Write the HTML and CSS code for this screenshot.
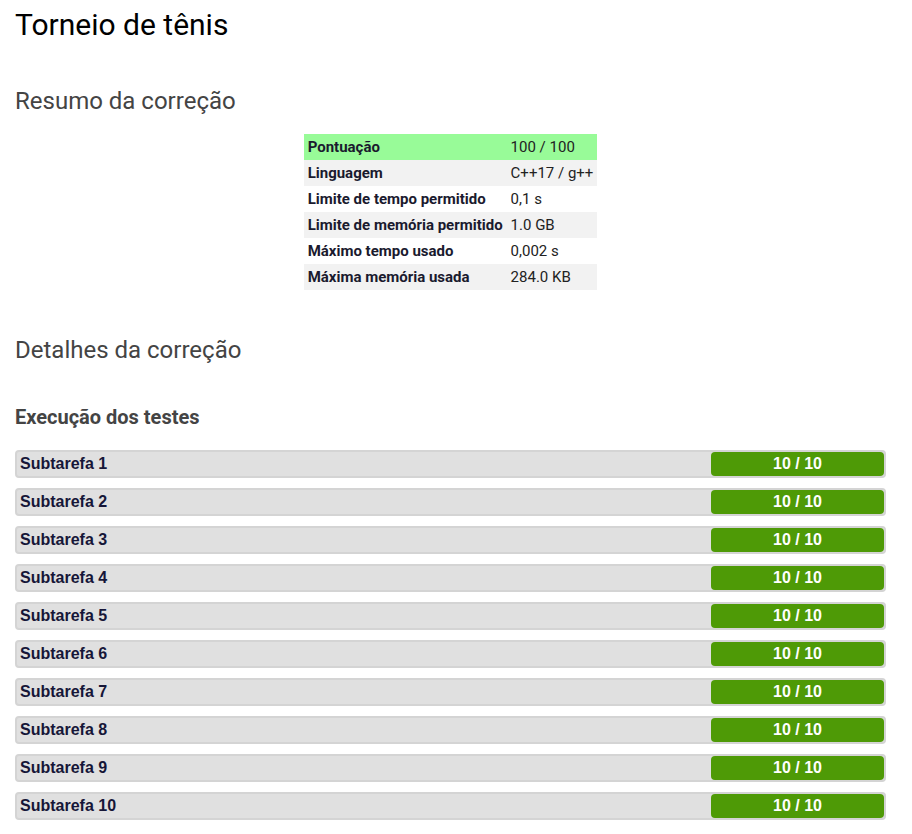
FILE: index.html
```html
<!DOCTYPE html>
<html lang="pt">
<head>
<meta charset="utf-8">
<title>Torneio de tênis</title>
<link rel="stylesheet" href="styles.css">
</head>
<body>
<div class="page">
  <h1 class="title">Torneio de tênis</h1>
  <h2 class="section">Resumo da correção</h2>
  <div class="summary-wrap">
    <table class="summary">
      <tr class="score"><th>Pontuação</th><td>100 / 100</td></tr>
      <tr class="alt"><th>Linguagem</th><td>C++17 / g++</td></tr>
      <tr><th>Limite de tempo permitido</th><td>0,1 s</td></tr>
      <tr class="alt"><th>Limite de memória permitido</th><td>1.0 GB</td></tr>
      <tr><th>Máximo tempo usado</th><td>0,002 s</td></tr>
      <tr class="alt"><th>Máxima memória usada</th><td>284.0 KB</td></tr>
    </table>
  </div>
  <h2 class="section details">Detalhes da correção</h2>
  <h3 class="sub">Execução dos testes</h3>
  <div class="tasks">
    <div class="task"><span class="name">Subtarefa 1</span><span class="badge">10 / 10</span></div>
    <div class="task"><span class="name">Subtarefa 2</span><span class="badge">10 / 10</span></div>
    <div class="task"><span class="name">Subtarefa 3</span><span class="badge">10 / 10</span></div>
    <div class="task"><span class="name">Subtarefa 4</span><span class="badge">10 / 10</span></div>
    <div class="task"><span class="name">Subtarefa 5</span><span class="badge">10 / 10</span></div>
    <div class="task"><span class="name">Subtarefa 6</span><span class="badge">10 / 10</span></div>
    <div class="task"><span class="name">Subtarefa 7</span><span class="badge">10 / 10</span></div>
    <div class="task"><span class="name">Subtarefa 8</span><span class="badge">10 / 10</span></div>
    <div class="task"><span class="name">Subtarefa 9</span><span class="badge">10 / 10</span></div>
    <div class="task"><span class="name">Subtarefa 10</span><span class="badge">10 / 10</span></div>
  </div>
</div>
</body>
</html>
```

FILE: styles.css
```css
html, body {
  margin: 0;
  padding: 0;
  background: #ffffff;
}
body {
  font-family: Roboto, "Liberation Sans", Arial, sans-serif;
}
.page {
  width: 871px;
  margin-left: 15px;
  padding-top: 6px;
}
.title {
  font-family: Roboto, sans-serif;
  font-weight: 400;
  font-size: 30px;
  line-height: 38px;
  color: #000;
  margin: 0;
}
.section {
  font-family: Roboto, sans-serif;
  font-weight: 400;
  font-size: 24px;
  line-height: 30px;
  color: #444;
  margin: 42px 0 0 0;
}
.summary-wrap {
  display: flex;
  justify-content: center;
  margin-top: 18px;
}
.summary {
  border-collapse: collapse;
  font-family: Roboto, sans-serif;
  font-size: 15px;
  color: #222;
}
.summary th, .summary td {
  height: 26px;
  padding: 0 4px;
  text-align: left;
  white-space: nowrap;
}
.summary th {
  font-weight: 700;
  color: #1a1a2e;
}
.summary td {
  width: 82px;
}
.summary tr.score {
  background: #98fb98;
}
.summary tr.alt {
  background: #f2f2f2;
}
.details {
  margin-top: 45px;
}
.sub {
  font-family: Roboto, sans-serif;
  font-weight: 700;
  font-size: 20px;
  line-height: 24px;
  color: #444;
  margin: 40px 0 0 0;
}
.tasks {
  display: flex;
  flex-direction: column;
  gap: 10px;
  margin-top: 21px;
}
.task {
  display: flex;
  align-items: center;
  justify-content: space-between;
  height: 24px;
  background: #e0e0e0;
  border: 2px solid #d4d4d4;
  border-radius: 4px;
  padding-left: 3px;
  padding-right: 0;
}
.name {
  font-family: "Liberation Sans", Arial, sans-serif;
  font-weight: 700;
  font-size: 16px;
  color: #161638;
}
.badge {
  width: 173px;
  height: 24px;
  line-height: 24px;
  background: #4e9a06;
  border-radius: 4px;
  color: #fff;
  text-align: center;
  font-family: "Liberation Sans", Arial, sans-serif;
  font-weight: 700;
  font-size: 16px;
}
```
